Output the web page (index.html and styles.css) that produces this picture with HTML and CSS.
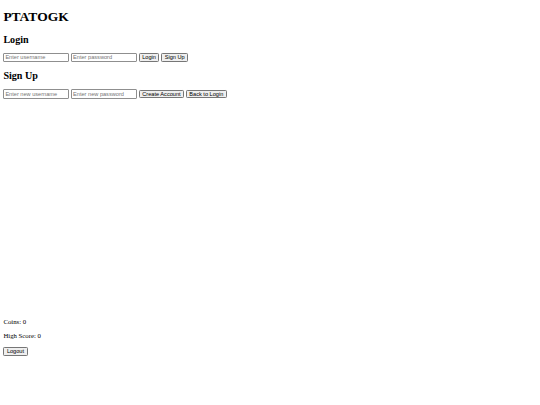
FILE: index.html
```html
<!DOCTYPE html>
<html>
<head>
<meta charset="utf-8">
<title>PTATOGK</title>
<link rel="stylesheet" href="styles.css">
</head>
<body class="page">
<h1 class="title">PTATOGK</h1>
<div class="panel">
  <h2 class="panel-title">Login</h2>
  <input class="field" type="text" placeholder="Enter username"> <input class="field" type="password" placeholder="Enter password"> <button class="btn">Login</button> <button class="btn">Sign Up</button>
</div>
<div class="panel">
  <h2 class="panel-title">Sign Up</h2>
  <input class="field" type="text" placeholder="Enter new username"> <input class="field" type="password" placeholder="Enter new password"> <button class="btn">Create Account</button> <button class="btn">Back to Login</button>
</div>
<div class="game-area"></div>
<p class="stat">Coins: 0</p>
<p class="stat">High Score: 0</p>
<button class="btn">Logout</button>
</body>
</html>
```
FILE: styles.css
```css
html { margin: 0; background: #fff; }
.page {
  margin: 0;
  padding: 0 3.375px 3.375px;
  font-family: "Liberation Serif", "Times New Roman", serif;
  font-size: 6.75px;
  line-height: 7.76px;
  color: #000;
}
.title {
  font-size: 13.5px;
  line-height: 15.5px;
  font-weight: bold;
  margin: 9.05px 0;
}
.panel-title {
  font-size: 10.125px;
  line-height: 11.6px;
  font-weight: bold;
  margin: 8.4px 0 7.4px;
}
.field {
  font-family: "Liberation Sans", Arial, sans-serif;
  font-size: 5.625px;
  line-height: 6px;
  width: 66px;
  height: 9.3px;
  box-sizing: border-box;
  padding: 0.4px 1px;
  margin: 0;
  border: 0.85px solid #8f8f8f;
  border-radius: 1px;
  vertical-align: middle;
  color: #000;
}
.field::placeholder { color: #757575; }
.btn {
  font-family: "Liberation Sans", Arial, sans-serif;
  font-size: 5.625px;
  line-height: 6px;
  height: 8.8px;
  box-sizing: border-box;
  padding: 0 2.5px;
  margin: 0;
  background: #efefef;
  border: 0.85px solid #767676;
  border-radius: 1.3px;
  color: #000;
  vertical-align: middle;
}
.game-area {
  height: 212.6px;
}
.stat {
  margin: 6.75px 0;
}
```
